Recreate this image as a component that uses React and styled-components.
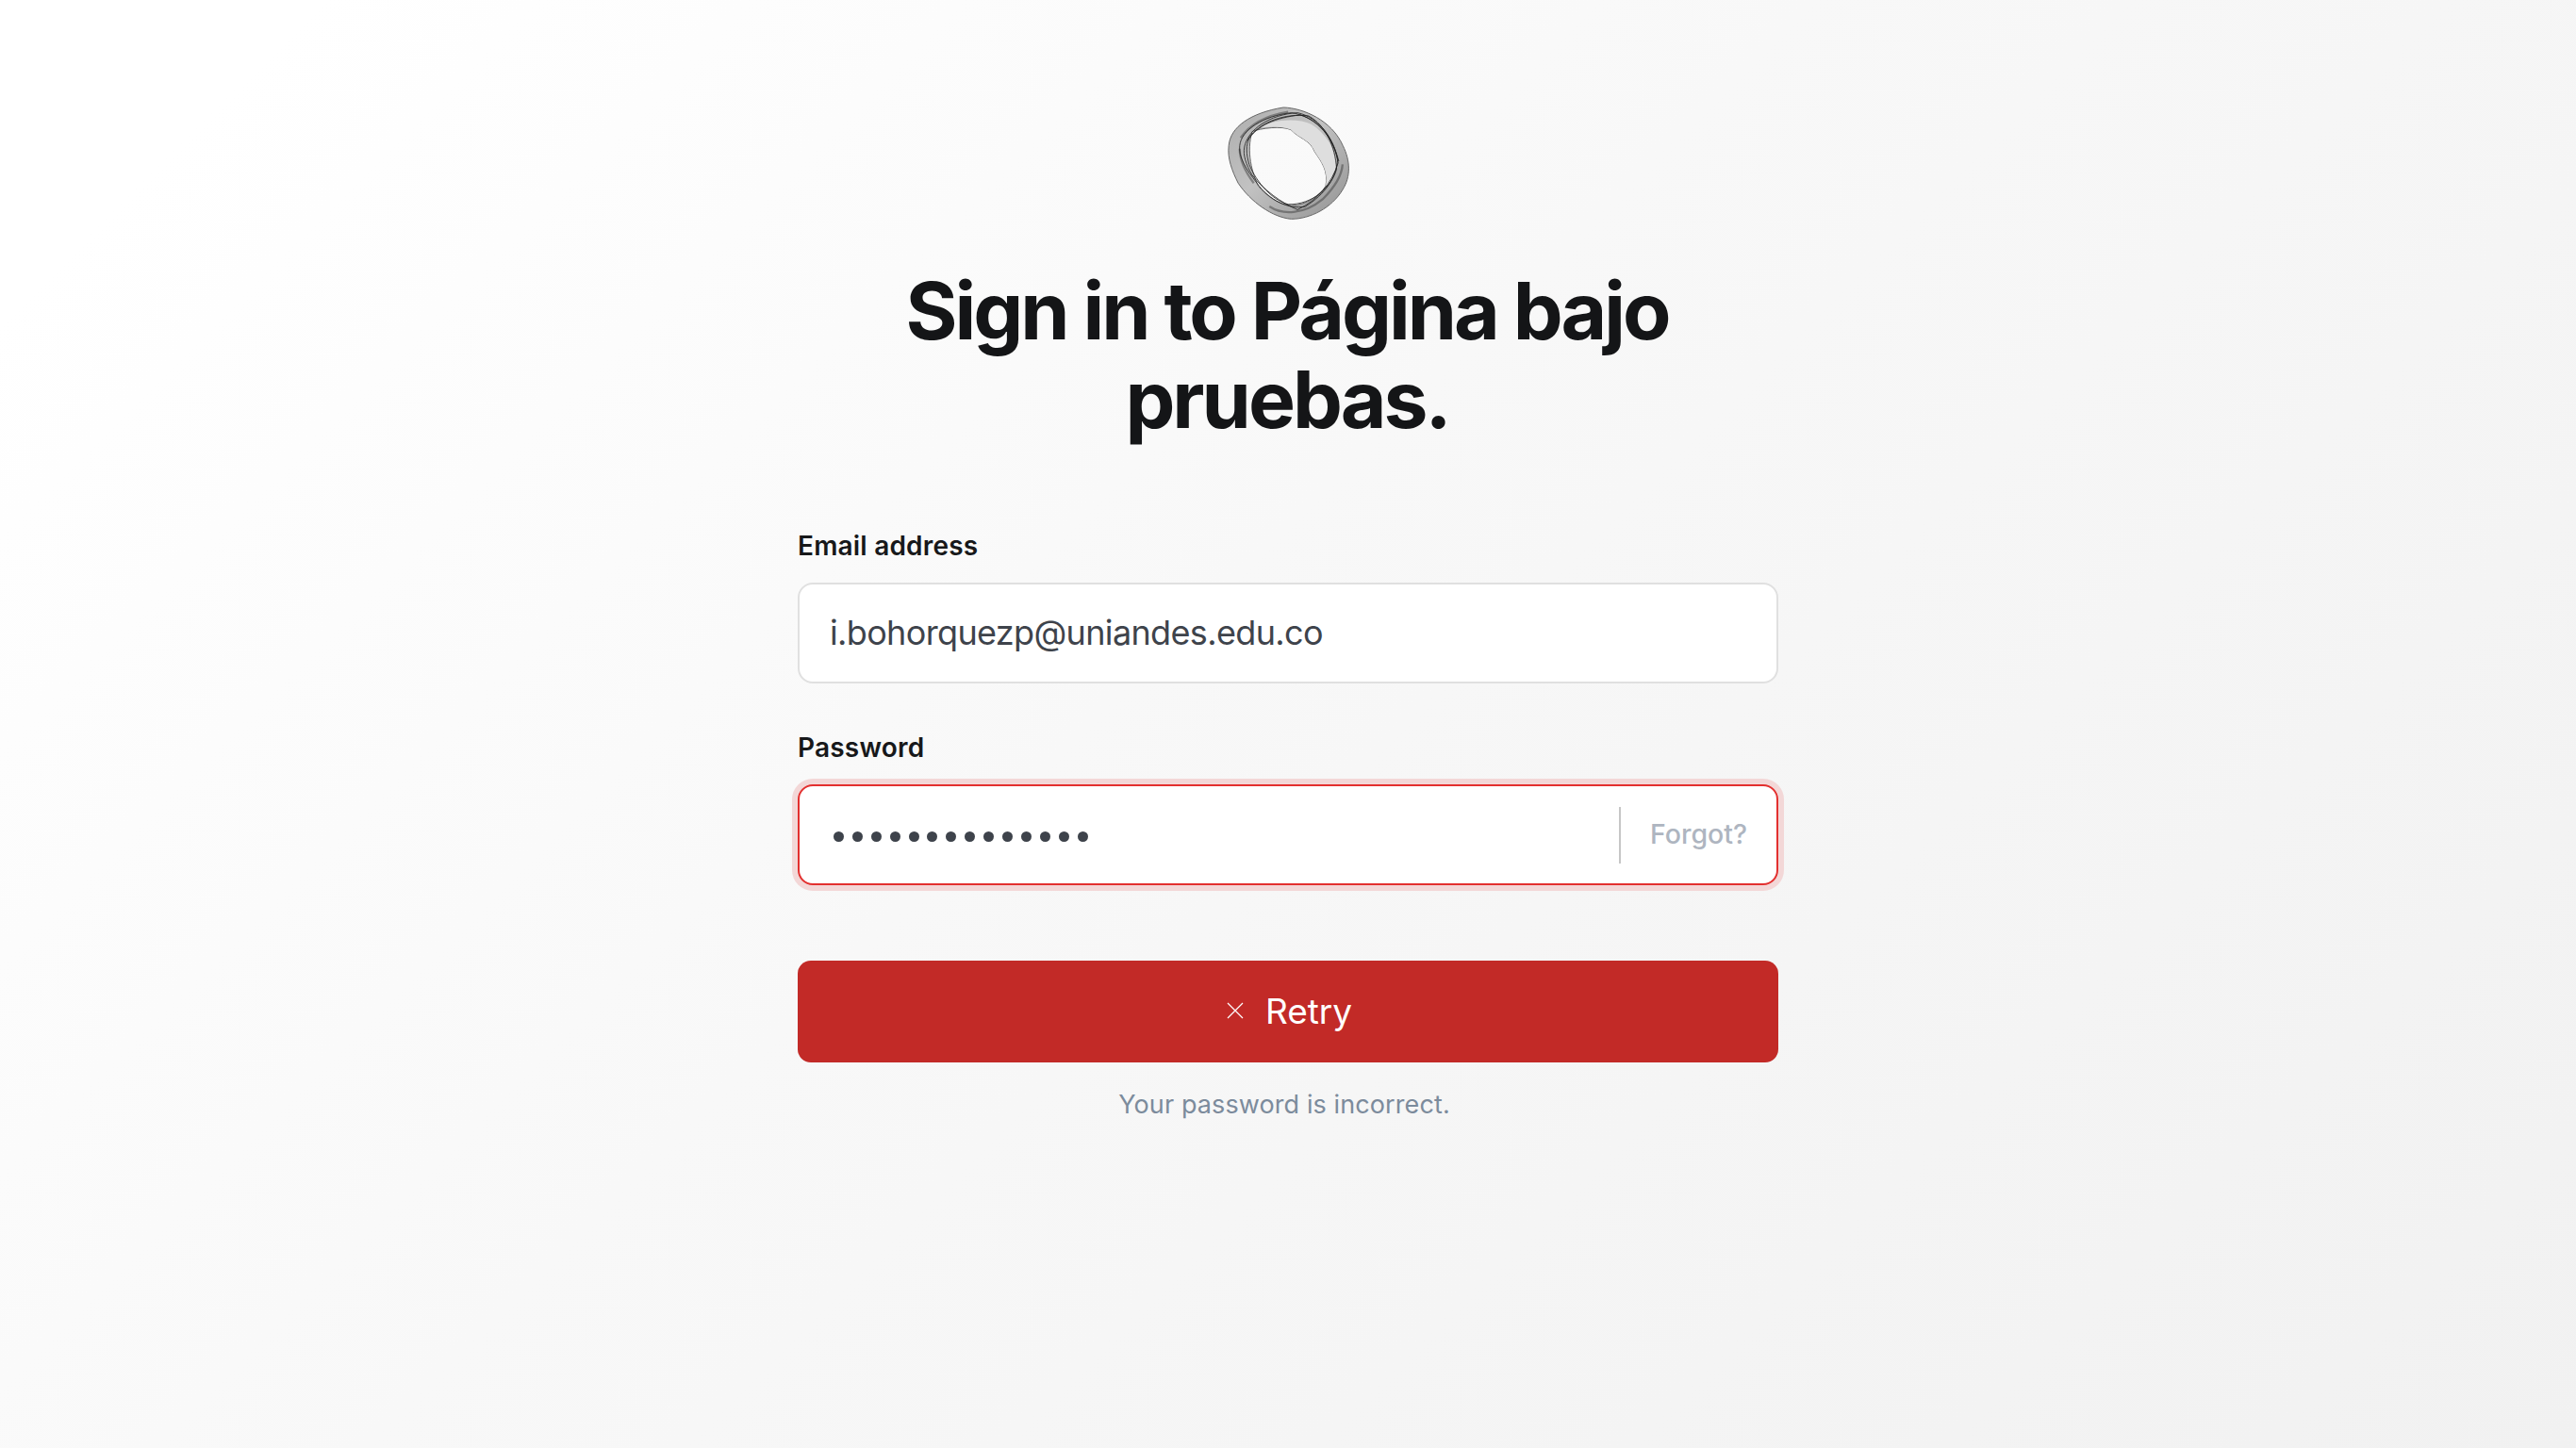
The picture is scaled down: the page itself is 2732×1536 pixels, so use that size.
import React from 'react'
import styled, { createGlobalStyle } from 'styled-components'

const GlobalStyle = createGlobalStyle`
  html, body {
    margin: 0;
    padding: 0;
    height: 100%;
  }
  body {
    font-family: Inter, "Liberation Sans", sans-serif;
    background: #fff;
  }
`

const Page = styled.main`
  min-height: 1536px;
  box-sizing: border-box;
  padding-top: 112px;
  display: flex;
  flex-direction: column;
  align-items: center;
  background: linear-gradient(135deg, #ffffff 8%, #f8f8f8 45%, #f1f1f1 100%);
`

const LogoMark = styled.svg`
  display: block;
  width: 132px;
  height: 122px;
  margin-left: 2px;
`

const Heading = styled.h1`
  width: 900px;
  margin: 49px 0 0;
  padding-right: 2px;
  font-size: 84px;
  line-height: 94px;
  font-weight: 700;
  letter-spacing: -3px;
  text-align: center;
  color: #141517;
`

const Form = styled.form`
  width: 1040px;
  margin-top: 92px;
  display: flex;
  flex-direction: column;
`

const Field = styled.div`
  display: flex;
  flex-direction: column;
  gap: 22px;
  margin-bottom: 52px;
`

const Label = styled.label`
  font-size: 28px;
  line-height: 33px;
  font-weight: 600;
  letter-spacing: 0.2px;
  color: #17181a;
`

const InputBox = styled.div`
  height: 107px;
  box-sizing: border-box;
  display: flex;
  align-items: center;
  background: #fff;
  border-radius: 16px;
  border: 2px solid ${p => (p.$error ? '#e3302f' : '#e0e0e0')};
  box-shadow: ${p => (p.$error ? '0 0 0 6px #f3d7d7' : 'none')};
`

const Value = styled.span`
  flex: 1;
  padding: 0 0 2px 32px;
  font-size: 36px;
  letter-spacing: -0.65px;
  color: #3e434b;
`

const Dots = styled.div`
  flex: 1;
  display: flex;
  gap: 8.9px;
  padding: 3px 0 0 36px;
`

const Dot = styled.span`
  width: 11px;
  height: 11px;
  border-radius: 50%;
  background: #3e434b;
`

const Divider = styled.span`
  width: 2px;
  height: 60px;
  background: #c6c6c6;
`

const Forgot = styled.a`
  padding: 0 31px 3px;
  font-size: 28.5px;
  font-weight: 500;
  color: #aeb5c0;
`

const RetryButton = styled.button`
  height: 108px;
  margin-top: 28px;
  padding: 0 0 2px 3px;
  border: 0;
  border-radius: 14px;
  display: flex;
  align-items: center;
  justify-content: center;
  gap: 23px;
  background: #c22a27;
  color: #fff;
  font-family: inherit;
  font-size: 37px;
  font-weight: 400;
`

const CloseIcon = styled.svg`
  width: 18px;
  height: 18px;
`

const Message = styled.p`
  margin: 27px 8px 0 0;
  font-size: 27px;
  line-height: 36px;
  letter-spacing: 0.1px;
  text-align: center;
  color: #7c8b9c;
`

const outer =
  'M100 190C105 130 170 85 275 68C340 70 430 110 465 190C490 240 490 290 465 330C430 390 360 425 300 425C240 420 170 370 130 310C110 270 95 230 100 190Z'
const hole =
  'M175 145C200 135 270 125 300 140C320 165 360 170 375 210C395 240 420 270 410 320C390 350 350 380 300 382C260 380 220 350 195 320C175 280 155 210 175 145Z'

const Logo = () => (
  <LogoMark viewBox="95 62 395 368" aria-hidden="true">
    <defs>
      <linearGradient id="ringFill" x1="0" y1="0" x2="1" y2="1">
        <stop offset="0" stopColor="#adadad" />
        <stop offset="0.45" stopColor="#c2c2c2" />
        <stop offset="1" stopColor="#929292" />
      </linearGradient>
    </defs>
    <path d={`${outer}${hole}`} fill="url(#ringFill)" fillRule="evenodd" stroke="#666" strokeWidth="3" />
    <path
      d="M190 135C240 105 320 100 365 122C410 150 440 200 445 245C445 280 425 310 410 320C420 270 395 240 375 210C360 170 320 165 300 140C270 125 215 130 190 135Z"
      fill="#dedede"
    />
    <g fill="none" stroke="#1c1c1c" strokeOpacity="0.8" strokeWidth="3">
      <path d="M135 190C140 140 210 95 300 85C370 95 430 150 448 235C445 290 410 345 345 385C290 395 230 365 190 310C155 265 130 225 135 190Z" />
      <path d="M150 195C160 140 230 90 320 85C390 100 440 170 450 245C430 310 385 365 320 395C270 375 210 330 175 285C155 250 145 220 150 195Z" />
      <path d="M165 165C200 115 280 85 355 95C410 125 440 190 445 265C430 320 370 380 290 378C240 365 190 310 165 250C155 215 155 190 165 165Z" />
      <path d="M160 175C190 125 250 100 330 92C400 115 435 175 452 240" />
    </g>
    <g fill="none" stroke="#222" strokeOpacity="0.4" strokeWidth="7">
      <path d="M230 385C270 412 340 412 400 362C440 322 462 282 464 250" />
      <path d="M138 165C170 118 230 92 290 82" />
      <path d="M135 200C135 235 150 270 180 310" />
    </g>
  </LogoMark>
)

const App = () => (
  <Page>
    <GlobalStyle />
    <Logo />
    <Heading>Sign in to Página bajo pruebas.</Heading>
    <Form>
      <Field>
        <Label>Email address</Label>
        <InputBox>
          <Value>i.bohorquezp@uniandes.edu.co</Value>
        </InputBox>
      </Field>
      <Field>
        <Label>Password</Label>
        <InputBox $error>
          <Dots>
            {Array.from({ length: 14 }).map((_, i) => (
              <Dot key={i} />
            ))}
          </Dots>
          <Divider />
          <Forgot>Forgot?</Forgot>
        </InputBox>
      </Field>
      <RetryButton type="button">
        <CloseIcon viewBox="0 0 18 18" fill="none" stroke="#fff" strokeWidth="1.2">
          <path d="M1 1l16 16M17 1L1 17" />
        </CloseIcon>
        Retry
      </RetryButton>
      <Message>Your password is incorrect.</Message>
    </Form>
  </Page>
)

export default App
